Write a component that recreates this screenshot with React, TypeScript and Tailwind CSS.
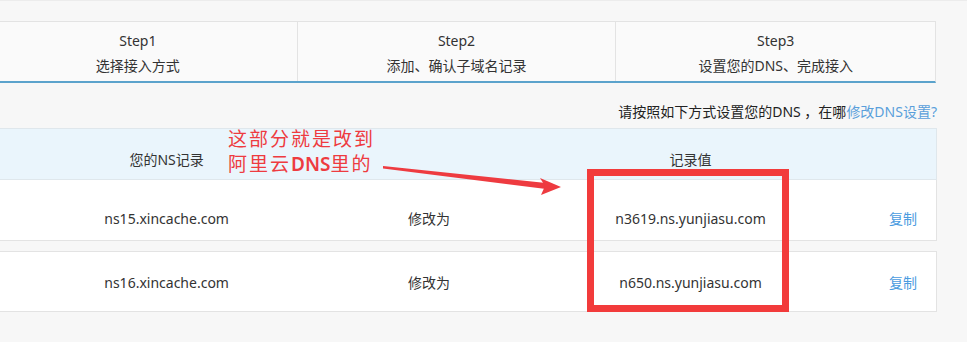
import React from "react";

const steps = [
  { t: "Step1", s: "选择接入方式" },
  { t: "Step2", s: "添加、确认子域名记录" },
  { t: "Step3", s: "设置您的DNS、完成接入" },
];

const rows = [
  { ns: "ns15.xincache.com", v: "n3619.ns.yunjiasu.com", pad: "pt-[29px] pb-[11px]" },
  { ns: "ns16.xincache.com", v: "n650.ns.yunjiasu.com", pad: "pt-[21px] pb-[18px]" },
];

export default function App() {
  return (
    <div
      className="relative w-[967px] h-[342px] overflow-hidden bg-[#f7f7f7] text-[#333] text-[14px]"
      style={{ fontFamily: '"Noto Sans", "Noto Sans CJK SC", sans-serif' }}
    >
      <div className="border-t border-[#ececec] h-0" />
      <div className="ml-[-21px] w-[958px]">
        {/* Steps */}
        <div className="mt-[20px] w-[957px] flex bg-[#fafafa] border-t border-r border-[#e3e3e3] border-b-2 border-b-[#5ba3cc]">
          {steps.map((st, i) => (
            <div
              key={st.t}
              className={`w-[319px] pt-[6px] pb-[3px] flex flex-col items-center leading-[25px] ${i < 2 ? "border-r border-[#e3e3e3]" : ""}`}
            >
              <div className="text-[14px]">{st.t}</div>
              <div className="text-[14px]">{st.s}</div>
            </div>
          ))}
        </div>

        {/* note */}
        <div className="mt-[19px] flex justify-end leading-[20px] text-[14px] text-[#222]">
          <span>请按照如下方式设置您的DNS ，在哪</span>
          <span className="text-[#5a9fdb]">修改DNS设置?</span>
        </div>

        {/* table */}
        <div className="mt-[6px]">
          <div className="flex bg-[#eaf5fc] border border-[#dfe7ec] pt-[21px] pb-[9px] leading-[20px]">
            <div className="w-[374px] text-center">您的NS记录</div>
            <div className="w-[152px]" />
            <div className="w-[372px] text-center">记录值</div>
            <div className="w-[60px]" />
          </div>
          {rows.map((r, i) => (
            <div
              key={r.ns}
              className={`flex bg-white border-x border-b border-[#e3e3e3] leading-[20px] ${r.pad} ${i > 0 ? "mt-[10px] border-t" : ""}`}
            >
              <div className="w-[374px] text-center">{r.ns}</div>
              <div className="w-[152px] text-center">修改为</div>
              <div className="w-[372px] text-center">{r.v}</div>
              <div className="w-[60px] text-center pr-[6px] text-[#4a9be0]">复制</div>
            </div>
          ))}
        </div>
      </div>

      {/* annotation */}
      <div className="absolute left-[228px] top-[127px] text-[#ee3b40] text-[19px] leading-[25px] tracking-[2px]">
        <div>这部分就是改到</div>
        <div>
          阿里云<span className="font-semibold tracking-[0px]">DNS</span>里的
        </div>
      </div>
      <svg className="absolute left-0 top-0" width="967" height="342">
        <polygon points="383,166 546,183 546,189 383,168.5" fill="#ee3b40" />
        <polygon points="540,178 561,187 541,195 545,186" fill="#ee3b40" />
      </svg>
      <div className="absolute left-[587px] top-[169px] w-[202px] h-[143px] border-[7px] border-[#f23b3b]" />
    </div>
  );
}
